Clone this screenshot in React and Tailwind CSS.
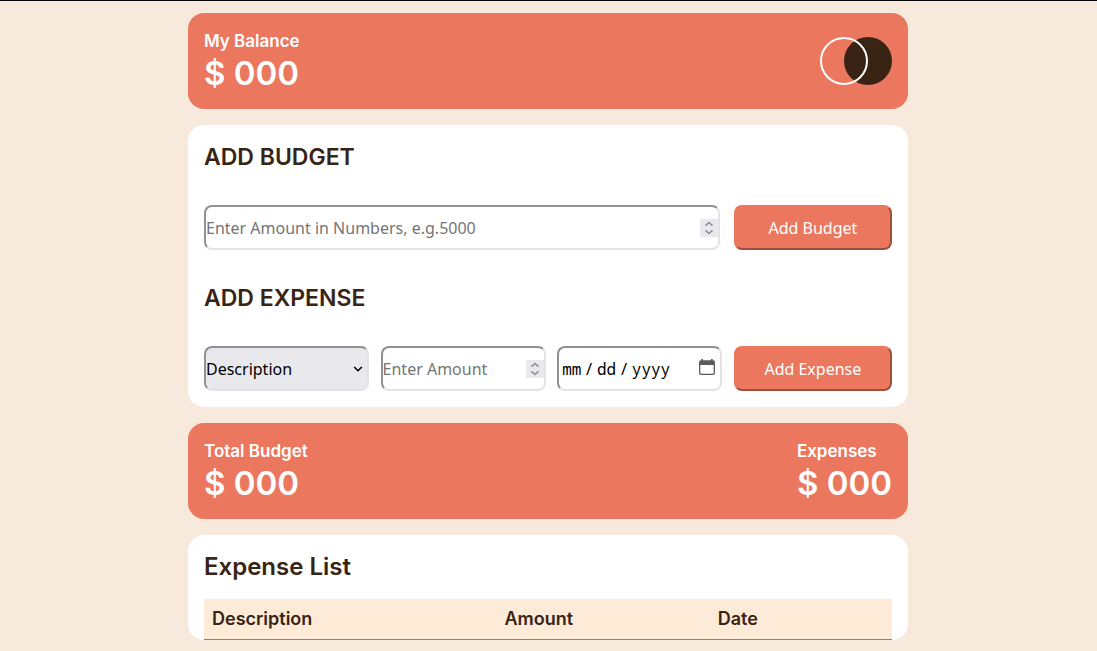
import React from "react";

const box =
  "h-[45px] w-full appearance-none rounded-lg border-2 border-t-[#919191] border-l-[#919191] border-r-[#e3e3e3] border-b-[#e3e3e3] text-base text-black";

function Total({ label, amount }) {
  return (
    <div className="text-white">
      <h2 className="text-[17px] leading-6 font-semibold">{label}</h2>
      <p className="text-[33px] leading-10 font-semibold">{amount}</p>
    </div>
  );
}

function NumberField({ label, placeholder }) {
  return (
    <div className="relative">
      <input
        type="number"
        aria-label={label}
        placeholder={placeholder}
        className={`${box} bg-white p-0 font-['Noto_Sans',sans-serif] placeholder:text-[#757575] placeholder:opacity-100 [&::-webkit-inner-spin-button]:appearance-none`}
      />
      <svg
        viewBox="0 0 18 18"
        aria-hidden="true"
        className="pointer-events-none absolute inset-y-0 right-0.5 my-auto size-[18px] bg-[#e9e9ed]"
      >
        <path
          d="M5.5 6.7 9 3.5l3.5 3.2M5.5 11.3 9 14.5l3.5-3.2"
          fill="none"
          stroke="#8f8f9d"
          strokeWidth="1.6"
        />
      </svg>
    </div>
  );
}

function ActionButton({ children }) {
  return (
    <button
      type="button"
      className="h-[45px] w-[23%] rounded-lg border-2 border-t-[#eb775f] border-l-[#eb775f] border-r-[#9c4f3f] border-b-[#9c4f3f] bg-[#eb775f] font-['Noto_Sans',sans-serif] text-base text-white"
    >
      {children}
    </button>
  );
}

export default function App() {
  return (
    <div className="min-h-screen border-t border-black bg-[#f7e9dc] pt-3 pr-[17px] pb-[11px] pl-4 font-[Inter,sans-serif] text-[#382315]">
      <main className="mx-auto flex max-w-[720px] flex-col gap-4">
        <section className="flex items-center justify-between rounded-2xl bg-[#eb775f] p-4">
          <Total label="My Balance" amount="$ 000" />
          <svg viewBox="0 0 72 48" className="h-12 w-[72px]" aria-hidden="true">
            <circle cx="48" cy="24" r="24" fill="#382315" />
            <circle cx="24" cy="24" r="23" fill="none" stroke="#fff" strokeWidth="2" />
          </svg>
        </section>

        <section className="flex flex-col gap-8 rounded-2xl bg-white p-4">
          <h2 className="text-[23px] leading-8 font-semibold">ADD BUDGET</h2>
          <form className="flex justify-between">
            <div className="w-3/4">
              <NumberField label="Budget amount" placeholder="Enter Amount in Numbers, e.g.5000" />
            </div>
            <ActionButton>Add Budget</ActionButton>
          </form>
          <h2 className="text-[23px] leading-8 font-semibold">ADD EXPENSE</h2>
          <form className="flex justify-between">
            <div className="relative w-[24%]">
              <select
                aria-label="Description"
                className={`${box} bg-[#e9e9ed] p-0 font-['Noto_Sans',sans-serif]`}
              >
                <option>Description</option>
              </select>
              <svg
                viewBox="0 0 10 6"
                aria-hidden="true"
                className="pointer-events-none absolute inset-y-0 right-1.5 my-auto h-1.5 w-2.5"
              >
                <path d="m1.2 1 3.8 3.7L8.8 1" fill="none" stroke="#000" strokeWidth="1.6" />
              </svg>
            </div>
            <div className="w-[24%]">
              <NumberField label="Expense amount" placeholder="Enter Amount" />
            </div>
            <div className="relative w-[24%]">
              <input
                type="date"
                aria-label="Expense date"
                className={`${box} bg-white py-0 pr-0 pl-[3px] font-['Noto_Sans_Mono','Liberation_Mono',monospace] [&::-webkit-calendar-picker-indicator]:opacity-0 [&::-webkit-datetime-edit]:p-0 [&::-webkit-datetime-edit-text]:px-[3px] [&::-webkit-datetime-edit-fields-wrapper]:p-0 [&::-webkit-datetime-edit-month-field]:p-0 [&::-webkit-datetime-edit-day-field]:p-0 [&::-webkit-datetime-edit-year-field]:p-0`}
              />
              <svg
                viewBox="0 0 16 16"
                aria-hidden="true"
                className="pointer-events-none absolute top-[13px] right-[7px] size-4"
              >
                <path
                  fill="#5b5b5b"
                  fillRule="evenodd"
                  d="M2.3 0H4v1.3h8V0h1.700v1.300H14a2 2 0 0 1 2 2V14a2 2 0 0 1-2 2H2a2 2 0 0 1-2-2V3.300a2 2 0 0 1 2-2h.3zM1.300 6v7.800a.9.9 0 0 0 .9.9h11.600a.9.9 0 0 0 .9-.9V6z"
                />
              </svg>
            </div>
            <ActionButton>Add Expense</ActionButton>
          </form>
        </section>

        <section className="flex items-center justify-between rounded-2xl bg-[#eb775f] p-4">
          <Total label="Total Budget" amount="$ 000" />
          <Total label="Expenses" amount="$ 000" />
        </section>

        <section className="flex flex-col gap-4 rounded-2xl bg-white px-4 pt-4">
          <h2 className="text-2xl leading-8 font-semibold">Expense List</h2>
          <table className="w-full table-fixed border-collapse text-left text-lg leading-6">
            <thead>
              <tr className="border-b border-[#94807a] bg-[#fdebd8]">
                <th className="w-[42.5%] p-2 font-semibold">Description</th>
                <th className="w-[31%] p-2 font-semibold">Amount</th>
                <th className="p-2 font-semibold">Date</th>
              </tr>
            </thead>
          </table>
        </section>
      </main>
    </div>
  );
}
